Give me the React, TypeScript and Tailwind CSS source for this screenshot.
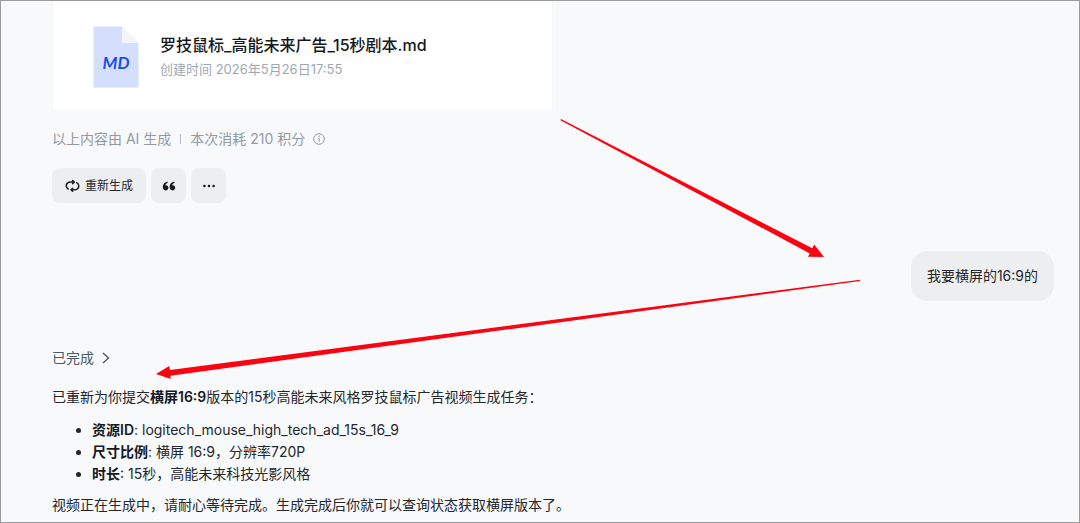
import React from 'react';

const taskDetails = [
  { label: '资源ID', value: 'logitech_mouse_high_tech_ad_15s_16_9' },
  { label: '尺寸比例', value: '横屏 16:9，分辨率720P' },
  { label: '时长', value: '15秒，高能未来科技光影风格' }
];

const FileIcon = () => (
  <svg className="w-[46px] h-[62px] shrink-0" viewBox="0 0 46 62" aria-hidden="true">
    <path d="M0.5 0.5H29L45.5 17V61.5H0.5Z" fill="#d4dffd" stroke="#e9eefb" />
    <path d="M29 0.5L45.5 17H29Z" fill="#f4f5f8" />
    <text
      x="23"
      y="43"
      textAnchor="middle"
      fill="#1d4fe6"
      fontFamily="Lato, sans-serif"
      fontSize="17"
      fontWeight="700"
      fontStyle="italic"
    >
      MD
    </text>
  </svg>
);

const RegenerateIcon = () => (
  <svg
    className="w-4 h-4"
    viewBox="0 0 16 16"
    fill="none"
    stroke="#15181c"
    strokeWidth="1.5"
    strokeLinecap="round"
    strokeLinejoin="round"
    aria-hidden="true"
  >
    <path d="M3.2 11C0.9 9.9 0.6 6.6 2.4 5.2C3.3 4.4 4.4 4.1 5.8 4.1H9" />
    <path d="M7.6 2.6L9.1 4.1L7.6 5.6" />
    <path d="M11.8 4.9C14.1 6 14.4 9.3 12.6 10.7C11.7 11.5 10.6 11.8 9.2 11.8H6.2" />
    <path d="M7.6 10.3L6.1 11.8L7.6 13.3" />
  </svg>
);

const QuoteIcon = () => (
  <svg className="w-4 h-4" viewBox="0 0 16 16" fill="#15181c" aria-hidden="true">
    <path d="M6.6 3.5C3.8 4 1.8 6 1.8 9.1C1.8 11.1 3 12.4 4.7 12.4C6.3 12.4 7.4 11.3 7.4 9.8C7.4 8.3 6.4 7.3 5 7.3C4.7 7.3 4.4 7.3 4.2 7.4C4.5 6.2 5.4 5.4 6.6 5Z" />
    <path d="M13.4 3.5C10.6 4 8.6 6 8.6 9.1C8.6 11.1 9.8 12.4 11.5 12.4C13.1 12.4 14.2 11.3 14.2 9.8C14.2 8.3 13.2 7.3 11.8 7.3C11.5 7.3 11.2 7.3 11 7.4C11.3 6.2 12.2 5.4 13.4 5Z" />
  </svg>
);

const MoreIcon = () => (
  <svg className="w-4 h-4" viewBox="0 0 16 16" fill="#15181c" aria-hidden="true">
    <circle cx="3.4" cy="8" r="1.3" />
    <circle cx="8" cy="8" r="1.3" />
    <circle cx="12.6" cy="8" r="1.3" />
  </svg>
);

const InfoIcon = () => (
  <svg className="w-3 h-3" viewBox="0 0 12 12" fill="none" stroke="#929ba4" aria-hidden="true">
    <circle cx="6" cy="6" r="5.3" />
    <path d="M5 5.4H6.2V8.8" />
    <path d="M5.5 3.4H6.6" strokeWidth="1.2" />
  </svg>
);

const App: React.FC = () => {
  return (
    <div
      lang="zh-CN"
      className="relative min-h-screen border border-[#9b9b9b] bg-[#f8f9fb] pl-[51px] pr-[25px] pb-1 font-['Inter','Noto_Sans_CJK_SC',sans-serif] text-sm text-[#24272b]"
    >
      {/* Generated file */}
      <div className="flex w-[501px] max-w-full items-center gap-5 border border-t-0 border-[#f5f6f8] bg-white pt-[25px] pb-[22px] pl-10">
        <FileIcon />
        <div className="pl-px">
          <h3 className="text-base leading-6 font-medium text-[#15181c]">罗技鼠标_高能未来广告_15秒剧本.md</h3>
          <p className="text-[13px] leading-6 text-[#a0a7ae]">创建时间 2026年5月26日17:55</p>
        </div>
      </div>

      {/* Usage */}
      <div className="mt-[18px] flex items-center text-sm leading-5 text-[#929ba4]">
        <span>以上内容由 AI 生成</span>
        <span className="mx-[9px] h-[10px] w-px bg-[#b4bbc2]" />
        <span className="mr-2">本次消耗 210 积分</span>
        <InfoIcon />
      </div>

      <div className="mt-[19px] flex gap-[5px]">
        <button className="flex h-[35px] items-center gap-1 rounded-lg bg-[#edeef0] px-[13px] text-xs text-[#24272b]">
          <RegenerateIcon />
          重新生成
        </button>
        <button aria-label="引用" className="flex h-[35px] w-[35px] items-center justify-center rounded-lg bg-[#edeef0]">
          <QuoteIcon />
        </button>
        <button aria-label="更多" className="flex h-[35px] w-[35px] items-center justify-center rounded-lg bg-[#edeef0]">
          <MoreIcon />
        </button>
      </div>

      {/* User message */}
      <div className="mt-12 flex justify-end">
        <p className="rounded-2xl bg-[#edeef0] px-4 py-[14px] leading-[22px]">我要横屏的16:9的</p>
      </div>

      {/* Reply */}
      <button className="mt-[46px] flex items-center gap-2 leading-[22px] text-[#4a5a66]">
        已完成
        <svg className="w-2 h-3" viewBox="0 0 8 12" fill="none" stroke="#4a5a66" strokeWidth="1.4" aria-hidden="true">
          <path d="M1 1L6.5 6L1 11" />
        </svg>
      </button>
      <p className="mt-[17px] leading-[22px]">
        已重新为你提交<strong className="font-semibold text-[#15181c]">横屏16:9</strong>版本的15秒高能未来风格罗技鼠标广告视频生成任务：
      </p>
      <ul className="mt-[11px] list-disc pl-10 leading-[22px]">
        {taskDetails.map((detail) => (
          <li key={detail.label}>
            <strong className="font-semibold text-[#15181c]">{detail.label}</strong>: {detail.value}
          </li>
        ))}
      </ul>
      <p className="mt-[9px] leading-[22px]">视频正在生成中，请耐心等待完成。生成完成后你就可以查询状态获取横屏版本了。</p>

      {/* Annotation arrows */}
      <svg
        className="pointer-events-none absolute -top-px -left-px h-[523px] w-[1080px] max-w-none"
        viewBox="0 0 1080 523"
        fill="#fd0210"
        aria-hidden="true"
      >
        <path d="M561 119L812.3 248.3L814.2 244.4L824 257L808 256.8L809.8 253.4L560.4 120.2Z" />
        <path d="M860 279.8L170 370L169.3 366L156 374L170.8 379L170.3 375.8L860 281Z" />
      </svg>
    </div>
  );
};

export default App;
